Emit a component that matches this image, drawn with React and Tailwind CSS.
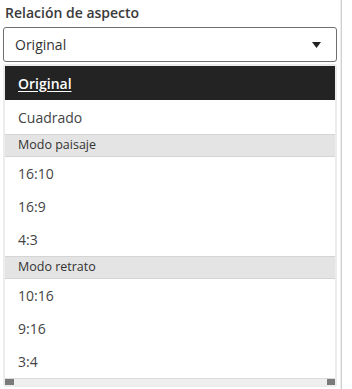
import React from "react";

const groups = [
  { items: ["Original", "Cuadrado"] },
  { title: "Modo paisaje", items: ["16:10", "16:9", "4:3"] },
  { title: "Modo retrato", items: ["10:16", "9:16", "3:4"] },
];

function Caret() {
  return (
    <svg width="9" height="6" viewBox="0 0 9 6" className="text-[#222]">
      <path d="M0 0 H9 L4.5 6 Z" fill="currentColor" />
    </svg>
  );
}

export default function App() {
  const selected = "Original";
  return (
    <div className="w-[352px] h-[389px] bg-white overflow-hidden flex text-[#333] font-['Open_Sans',sans-serif]">
      <div className="w-[337px] pl-[3px] pt-[3px] flex flex-col">
        <div className="text-[14px] font-semibold leading-[20px] pl-[2px] text-[#3a3a3a]">Relación de aspecto</div>
        <div className="mt-[4px] h-[35px] border border-[#6f6f6f] rounded-[3px] flex items-center justify-between pl-[11px] pr-[15px] text-[14px]">
          <span>Original</span>
          <Caret />
        </div>
        <div className="mt-[2px] border-[2px] border-[#ececec] rounded-[3px] flex flex-col">
          {groups.map((g, gi) => (
            <div key={gi} className="flex flex-col">
              {g.title && (
                <div className="h-[23px] bg-[#e4e4e4] border-y border-[#d4d4d4] flex items-center pl-[13px] text-[12.5px] text-[#333]">
                  {g.title}
                </div>
              )}
              {g.items.map((it, i) => (
                <div
                  key={it}
                  className={
                    it === selected
                      ? "h-[34px] bg-[#232323] text-white underline underline-offset-2 font-semibold flex items-center pl-[13px] text-[14px]"
                      : gi === 0
                        ? "h-[34px] flex items-center pl-[13px] text-[14px] text-[#444]"
                        : "h-[33px] flex items-center pl-[13px] text-[14px] text-[#444]"
                  }
                >
                  {it}
                </div>
              ))}
            </div>
          ))}
          <div className="h-[7px] bg-[#efefef] flex justify-between border-t border-[#dadada]">
            <div className="w-[9px] bg-[#7a7a7a]" />
            <div className="w-[8px] bg-[#7a7a7a]" />
          </div>
        </div>
      </div>
      <div className="w-[2px] ml-[3px] bg-[#ececec] border-r border-[#d0d0d0]" />
    </div>
  );
}
